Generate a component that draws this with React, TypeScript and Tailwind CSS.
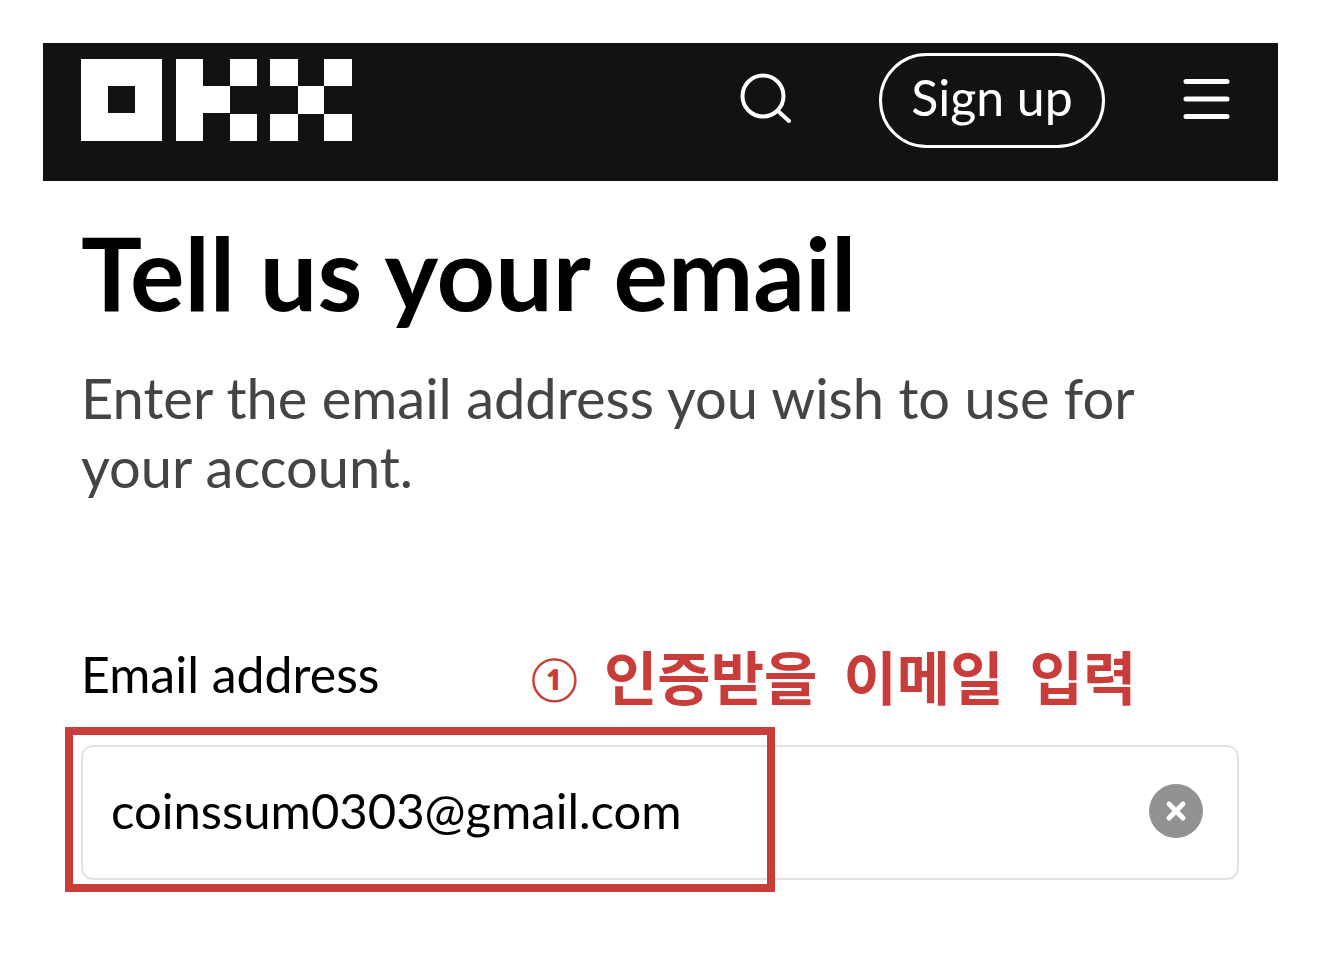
import { useState } from 'react';

function OkxLogo() {
  return (
    <svg viewBox="0 0 271 82" className="h-[82px] w-[271px]" fill="#fff" role="img" aria-label="OKX">
      <path fillRule="evenodd" d="M0 0H81V82H0ZM27 27V54H54V27Z" />
      <path d="M95 0H122V27H149V54H122V82H95ZM149 0H176V27H149ZM149 55H176V82H149Z" />
      <path d="M189 0H217V27H189ZM243 0H271V27H243ZM217 27H243V55H217ZM189 55H217V82H189ZM243 55H271V82H243Z" />
    </svg>
  );
}

function Header() {
  return (
    <header className="flex h-[138px] items-start bg-[#121212] pr-12 pl-[38px]">
      <a href="#" className="mt-4">
        <OkxLogo />
      </a>
      <div className="ml-auto flex items-center pt-[10px]">
        <button type="button" aria-label="Search" className="mr-[88px]">
          <svg viewBox="0 0 52 56" className="h-[56px] w-[52px]" fill="none" stroke="#fff" strokeWidth="4" strokeLinecap="round">
            <circle cx="24" cy="23" r="20.5" />
            <path d="M39 38L50 48" />
          </svg>
        </button>
        <button
          type="button"
          className="mr-[78px] h-[95px] w-[226px] rounded-full border-3 border-white pb-2 text-[50px] leading-none text-white"
        >
          Sign up
        </button>
        <button type="button" aria-label="Menu">
          <svg viewBox="0 0 47 44" className="h-[44px] w-[47px]" stroke="#fff" strokeWidth="5" strokeLinecap="round">
            <path d="M3 2.5H44M3 20H44M3 37.5H44" />
          </svg>
        </button>
      </div>
    </header>
  );
}

export default function App() {
  const [email, setEmail] = useState('coinssum0303@gmail.com');

  return (
    <div className="min-h-screen bg-white pt-[43px] pr-[42px] pl-[43px] font-['Lato','Noto_Sans_CJK_KR',sans-serif] text-black">
      <Header />
      <main className="pr-[39px] pl-[38px]">
        <h1 className="mt-9 text-[102px] leading-[110px] font-bold">Tell us your email</h1>
        <p className="mt-9 text-[56px] leading-[69px] text-[#444]">
          Enter the email address you wish to use for your account.
        </p>

        <div className="mt-[138px] flex items-center">
          <label htmlFor="email" className="w-[450px] text-[50px] leading-[70px]">
            Email address
          </label>
          <p className="flex items-center gap-[26px] pt-2 text-[58px] leading-[62px] font-bold text-[#c83d3a]">
            <span className="text-[42px]">①</span>
            <span>인증받을</span>
            <span>이메일</span>
            <span>입력</span>
          </p>
        </div>

        <div className="relative mt-9 flex h-[135px] items-center rounded-xl border-2 border-[#e3e3e3] pr-[34px] pb-1 pl-7">
          <input
            id="email"
            type="email"
            value={email}
            onChange={(e) => setEmail(e.target.value)}
            className="min-w-0 flex-1 text-[49px] outline-none"
          />
          <button type="button" aria-label="Clear email" onClick={() => setEmail('')}>
            <svg viewBox="0 0 54 54" className="size-[54px]">
              <circle cx="27" cy="27" r="27" fill="#929292" />
              <path d="M20 20L34 34M34 20L20 34" stroke="#fff" strokeWidth="5" strokeLinecap="round" />
            </svg>
          </button>
          {/* Marca o campo a preencher */}
          <div className="pointer-events-none absolute -top-5 -left-[18px] h-[165px] w-[710px] border-8 border-[#c83d3a]" />
        </div>
      </main>
    </div>
  );
}
